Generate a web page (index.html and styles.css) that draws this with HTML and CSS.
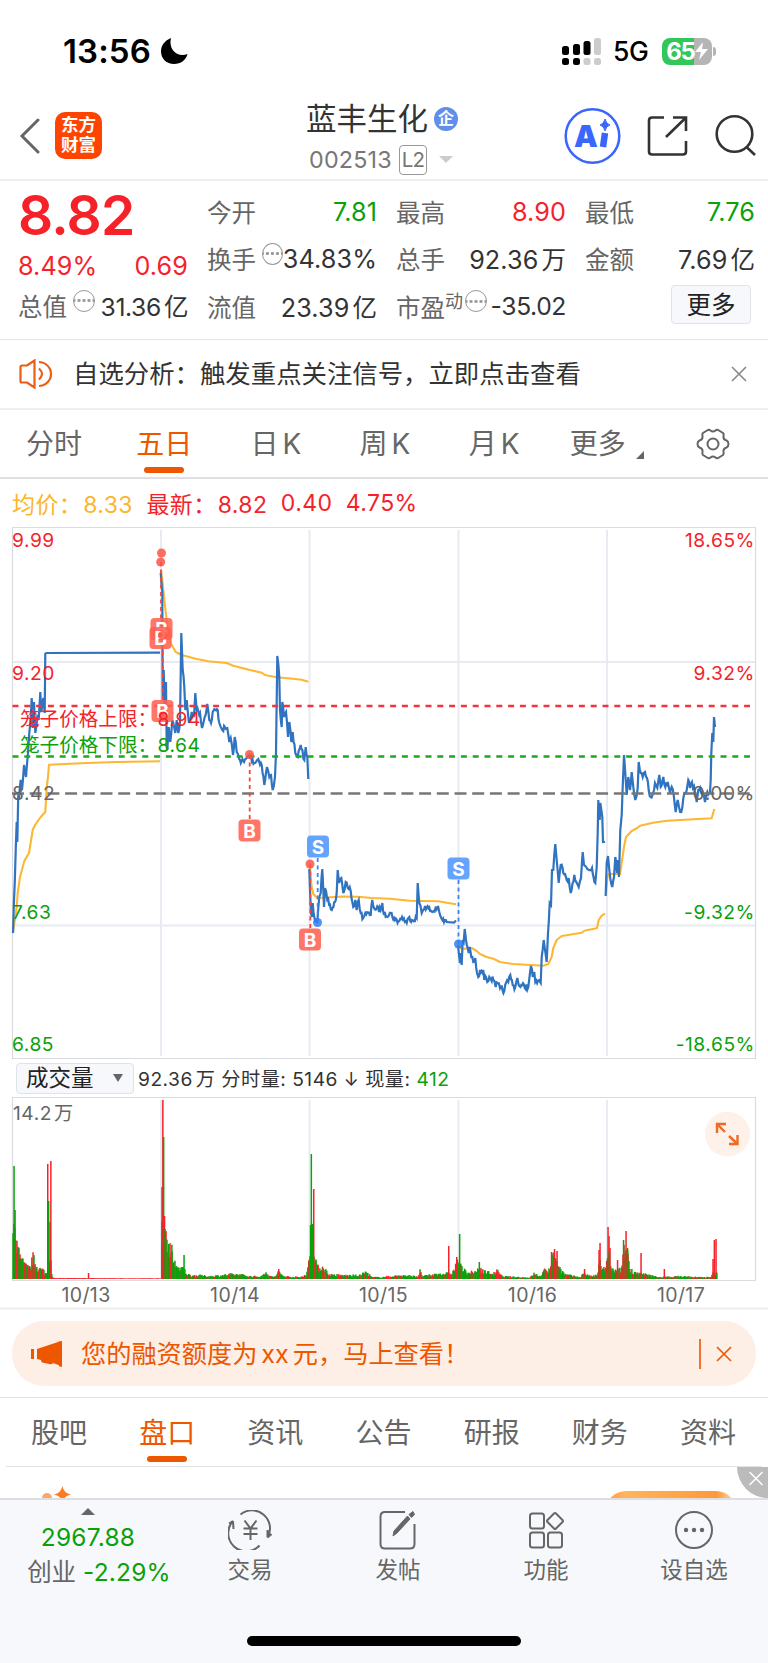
FILE: index.html
```html
<!DOCTYPE html>
<html lang="zh-CN">
	<head>
		<meta charset="UTF-8">
		<title>蓝丰生化 002513</title>
		<link rel="stylesheet" href="styles.css">
		<script src="chart.js" defer></script>
	</head>
	<body>
		<div class="status">
			<div class="clock">13:56</div>
			<svg class="moon" width="27" height="26" viewBox="0 0 27 26"><path d="M10 0C3 3 0 8 0 13.500C0 20.500 5.500 26 13 26C20 26 25 22 26.500 16C17 20 7 12 10 0Z"/></svg>
			<svg class="signal" width="40" height="27" viewBox="0 0 40 27">
				<g fill="#000">
					<rect x="0" y="8" width="7" height="9" rx="2.500"/><rect x="11" y="6" width="7" height="11" rx="2.500"/><rect x="21.500" y="3" width="7" height="14" rx="2.500"/>
					<rect x="0" y="20" width="7" height="7" rx="2.500"/><rect x="11" y="20" width="7" height="7" rx="2.500"/>
				</g>
				<g fill="#ccc">
					<rect x="32" y="0" width="7" height="17" rx="2.500"/><rect x="21.500" y="20" width="7" height="7" rx="2.500"/><rect x="32" y="20" width="7" height="7" rx="2.500"/>
				</g>
			</svg>
			<div class="net">5G</div>
			<div class="battery">
				<span>65</span>
				<svg width="13" height="18" viewBox="0 0 13 18"><path d="M8 0L0 10H6L4 18L13 7H7Z" fill="#fff"/></svg>
			</div>
			<i class="cap"></i>
		</div>

		<div class="header">
			<svg class="back" width="22" height="36" viewBox="0 0 22 36"><path d="M19 2L3 18L19 34"/></svg>
			<div class="logo">东方<br>财富</div>
			<div class="title">
				<div class="name">蓝丰生化<span class="qi">企</span></div>
				<div class="code">002513<span class="l2">L2</span><i class="down"></i></div>
			</div>
			<svg class="tools" width="200" height="60" viewBox="560 106 200 60">
				<circle cx="592.500" cy="136" r="26.800" stroke="#3a66fb" stroke-width="2.500"/>
				<text x="574" y="147" class="ai">A</text>
				<path d="M605 133L603 147" stroke="#3a66fb" stroke-width="6.500"/>
				<path d="M605 119Q606 124 610 125Q606 126 605 131Q604 126 600 125Q604 124 605 119Z" fill="#3a66fb" stroke="#3a66fb" stroke-width="1"/>
				<path d="M664 117.500H652Q649 117.500 649 120.500V151.500Q649 154.500 652 154.500H683Q686 154.500 686 151.500V141M673 117.500H686V131M685.500 118L666 137"/>
				<circle cx="734.500" cy="134" r="17.800"/>
				<path d="M746.500 147L755 155"/>
			</svg>
		</div>

		<div class="quote">
			<div class="now">
				<div class="price">8.82</div>
				<div class="cell red"><span>8.49%</span><span>0.69</span></div>
				<div class="cell"><label>总值</label><i class="dots"></i><span class="tight">31.36<em>亿</em></span></div>
			</div>
			<div class="col">
				<div class="cell"><label>今开</label><span class="green">7.81</span></div>
				<div class="cell"><label>换手</label><i class="dots"></i><span>34.83%</span></div>
				<div class="cell"><label>流值</label><span>23.39<em>亿</em></span></div>
			</div>
			<div class="col">
				<div class="cell"><label>最高</label><span class="red">8.90</span></div>
				<div class="cell"><label>总手</label><span>92.36<em>万</em></span></div>
				<div class="cell"><label>市盈<sup>动</sup></label><i class="dots"></i><span class="tight">-35.02</span></div>
			</div>
			<div class="col">
				<div class="cell"><label>最低</label><span class="green">7.76</span></div>
				<div class="cell"><label>金额</label><span>7.69<em>亿</em></span></div>
				<div class="cell end"><button class="more">更多</button></div>
			</div>
		</div>

		<div class="notice">
			<svg width="34" height="30" viewBox="0 0 34 30"><path d="M1.500 8Q1.500 6.500 3 6.500H8L15.500 1.500V28.500L8 23.500H3Q1.500 23.500 1.500 22ZM20 9.500Q26 15 20 20.500M20 3Q27 3 31 10Q33 15 31 20Q27 27 20 27"/></svg>
			<p>自选分析：触发重点关注信号，立即点击查看</p>
			<svg class="close" width="16" height="16" viewBox="0 0 16 16"><path d="M1 1L15 15M15 1L1 15"/></svg>
		</div>

		<div class="tabs period">
			<span>分时</span>
			<span class="on">五日</span>
			<span>日<b>K</b></span>
			<span>周<b>K</b></span>
			<span>月<b>K</b></span>
			<span class="drop">更多</span>
			<svg width="34" height="32" viewBox="0 0 34 32"><path d="M11 2.500Q13 1 14.500 2.500Q17 4.500 19.500 2.500Q21 1 23 2.500L27 5Q28 6 27.500 8Q27 11.500 30.500 12.500Q32.500 13.500 32.500 16Q32.500 18.500 30.500 19.500Q27 20.500 27.500 24Q28 26 27 27L23 29.500Q21 31 19.500 29.500Q17 27.500 14.500 29.500Q13 31 11 29.500L7 27Q6 26 6.500 24Q7 20.500 3.500 19.500Q1.500 18.500 1.500 16Q1.500 13.500 3.500 12.500Q7 11.500 6.500 8Q6 6 7 5Z"/><circle cx="17" cy="16" r="5.500"/></svg>
		</div>

		<div class="info red"><span class="avg">均价：<b>8.33</b></span><span>最新：<b>8.82</b></span><span>0.40</span><span>4.75%</span></div>

		<!-- price chart, five sessions -->
		<svg class="price-chart" width="768" height="534" viewBox="0 526 768 534">
			<path class="grid" d="M161 530V1056M309.500 530V1056M458.500 530V1056M607 530V1056M12 662H755M12 925.500H755"/>
			<path class="frame" d="M12.500 527.500H755.500V1058.500H12.500Z"/>
			<g id="avg"></g>
			<g id="line"></g>
			<path class="limit" stroke="#f2353c" d="M12.500 706H750"/>
			<path class="limit" stroke="#1fa81f" d="M12.500 756.500H750"/>
			<path class="base" d="M12 793.500H750"/>
			<g id="marks"></g>
			<g class="axis red">
				<text x="12" y="547">9.99</text><text x="12" y="679.500">9.20</text>
				<text class="r" x="755" y="547">18.65%</text><text class="r" x="755" y="679.500">9.32%</text>
			</g>
			<g class="axis gray">
				<text x="12" y="799.500">8.42</text><text class="r" x="755" y="799.500">0.00%</text>
			</g>
			<g class="axis green">
				<text x="12" y="918.500">7.63</text><text x="12" y="1051">6.85</text>
				<text class="r" x="755" y="918.500">-9.32%</text><text class="r" x="755" y="1051">-18.65%</text>
			</g>
			<text class="cage red" x="20" y="725.500">笼子价格上限：<tspan x="157.500">8.94</tspan></text>
			<text class="cage green" x="20" y="751.500">笼子价格下限：<tspan x="157.500">8.64</tspan></text>
		</svg>

		<div class="vol-head">
			<button>成交量<i class="tri"></i></button>
			<p>92.36<em>万</em> 分时量: 5146 <span class="arrow">↓</span> 现量: <span class="green">412</span></p>
		</div>
		<svg class="vol-chart" width="768" height="214" viewBox="0 1096 768 214">
			<path class="grid" d="M161 1100V1279M309.500 1100V1279M458.500 1100V1279M607 1100V1279"/>
			<path class="frame" d="M12.500 1280.500V1097.500H755.500V1280.500Z"/>
			<path d="M0 1308.500H768" stroke="#eee" stroke-width="2"/>
			<g id="vol"></g>
			<text class="axis gray" x="13" y="1119.500">14.2<tspan dx="2">万</tspan></text>
			<circle cx="727.500" cy="1134" r="22.500" fill="#fdf1ea"/>
			<path class="expand" d="M717 1133V1124H726M717.500 1124.500L725 1132M729 1144H737.500V1135M737 1143.500L729 1136"/>
			<g class="dates">
				<text x="86" y="1302">10/13</text><text x="235" y="1302">10/14</text><text x="383.500" y="1302">10/15</text><text x="532.500" y="1302">10/16</text><text x="681" y="1302">10/17</text>
			</g>
		</svg>

		<div class="banner-wrap">
			<div class="banner">
				<svg width="32" height="26" viewBox="0 0 32 26"><path d="M0 8H3V18H0ZM6 8L27 1Q28 0 31 0V26Q28 26 27.500 24L22 22Q21 24 18 23L11 21.500Q10 20 10 19L6 18Z" fill="#ec5700"/></svg>
				<p>您的融资额度为<b>xx</b>元，马上查看！</p>
				<svg class="bclose" width="34" height="30" viewBox="0 0 34 30"><path d="M1 0V30M18 8L32 22M32 8L18 22"/></svg>
			</div>
		</div>

		<div class="tabs nav">
			<span>股吧</span><span class="on">盘口</span><span>资讯</span><span>公告</span><span>研报</span><span>财务</span><span>资料</span>
		</div>

		<div class="peek">
			<svg width="768" height="31" viewBox="0 1467 768 31">
				<defs><linearGradient id="pill"><stop offset="0" stop-color="#ff9a45"/><stop offset=".15" stop-color="#ffb45c"/><stop offset=".85" stop-color="#ff9838"/><stop offset="1" stop-color="#ffe0a8"/></linearGradient></defs>
				<path d="M62.500 1486Q63.500 1493 71 1494.500Q65 1496 64 1499H61Q60 1496 54 1494.500Q61 1493 62.500 1486Z" fill="#ff7a22"/>
				<circle cx="47" cy="1498" r="5" fill="#ffa56c"/>
				<rect x="606" y="1491" width="130" height="40" rx="20" fill="url(#pill)"/>
				<circle cx="768" cy="1467" r="31" fill="#bbb"/>
				<path d="M749.500 1472L762.500 1485M762.500 1472L749.500 1485" stroke="#fff" stroke-width="1.500"/>
			</svg>
		</div>

		<div class="footer">
			<div class="index">
				<i class="up"></i>
				<div class="green">2967.88</div>
				<div>创业 <span class="green">-2.29%</span></div>
			</div>
			<div class="item">
				<svg width="44" height="40" viewBox="0 0 44 40"><path d="M12.500 4.500A18 18 0 0 1 39.500 27.500L43.500 24M31.500 35.500A18 18 0 0 1 5 11L1 13.500M5 11L5.500 19M39.500 27.500L39.500 20M16.500 10.500L22.500 18.500L28.500 10.500M22.500 18.500V30M15.500 18.500H29.500M15.500 24H29.500"/></svg>
				交易
			</div>
			<div class="item">
				<svg width="44" height="40" viewBox="0 0 44 40"><path d="M29 2H9Q4.500 2 4.500 6.500V34Q4.500 38.500 9 38.500H34Q38.500 38.500 38.500 34V14"/><path d="M17 26L18 21L31.500 6L34 9L21 23ZM33 4.500L37 1.500L38.500 4.500L35.500 7.500Z" fill="#666" stroke-width="1"/></svg>
				发帖
			</div>
			<div class="item">
				<svg width="44" height="40" viewBox="0 0 44 40"><rect x="6" y="3.500" width="14" height="15" rx="2.500"/><rect x="6" y="22.500" width="14" height="15" rx="2.500"/><rect x="24" y="22.500" width="14" height="15" rx="2.500"/><path d="M30 3.500Q31 2.500 32 3.500L38.500 10Q39.500 11 38.500 12L32 18.500Q31 19.500 30 18.500L23.500 12Q22.500 11 23.500 10Z"/></svg>
				功能
			</div>
			<div class="item">
				<svg width="44" height="40" viewBox="0 0 44 40"><circle cx="22" cy="20" r="18"/><g fill="#666" stroke="none"><circle cx="14" cy="20" r="2.200"/><circle cx="22" cy="20" r="2.200"/><circle cx="30" cy="20" r="2.200"/></g></svg>
				设自选
			</div>
			<i class="home"></i>
		</div>
	</body>
</html>
```
FILE: styles.css
```css
*{margin:0;padding:0;box-sizing:border-box;}
body{width:768px;height:1663px;overflow:hidden;background:#fff;color:#333;font-family:Inter,"Noto Sans CJK SC",sans-serif;display:flex;flex-direction:column;}
body > *{flex:none;}
svg{display:block;fill:none;}
i,em{font-style:normal;}
b{font-weight:400;}
button{font-family:inherit;color:#222;background:#f7f8fb;border:1px solid #dfe2e9;border-radius:4px;}
.red{color:#f5222a;fill:#f5222a;}
.green{color:#0aa10a;fill:#0aa10a;}
.gray{fill:#666;}

.status{height:90px;padding:12px 0 0 63px;display:flex;align-items:center;}
.clock{width:98px;font-size:33px;font-weight:600;color:#000;letter-spacing:.1px;}
.moon{fill:#000;margin-right:374px;}
.signal{margin-right:11px;}
.net{width:49px;font-size:26.5px;color:#000;font-weight:500;letter-spacing:-.3px;}
.battery{width:50px;height:27px;border-radius:8px;background:linear-gradient(90deg,#32c758 65%,#b5b5b5 65%);display:flex;align-items:center;justify-content:center;color:#fff;font-size:24px;font-weight:700;letter-spacing:-1.2px;}
.cap{width:3px;height:9px;margin-left:1px;border-radius:0 4px 4px 0;background:#b5b5b5;}

.header{height:91px;border-bottom:2px solid #eee;display:flex;align-items:center;padding:2px 0 0 19px;}
.back{stroke:#666;stroke-width:3;stroke-linecap:round;margin-right:14px;}
.logo{width:47px;height:47px;background:#ff4400;border-radius:10px;color:#fff;font-size:17.500px;font-weight:700;line-height:20px;text-align:center;padding-top:3px;}
.title{margin-left:204px;width:254px;padding-top:6px;}
.name{font-size:30.500px;line-height:40px;height:42px;display:flex;align-items:center;}
.qi{width:24px;height:24px;margin-left:6px;border-radius:50%;background:#618ee9;color:#fff;font-size:16px;line-height:23px;text-align:center;font-weight:700;}
.code{display:flex;align-items:center;height:39px;padding-left:3px;font-size:23.300px;letter-spacing:.2px;color:#777;}
.l2{width:28px;height:30px;margin:0 12px 0 7px;border:1.500px solid #999;border-radius:4px;font-size:20.500px;line-height:28px;text-align:center;letter-spacing:-1px;}
.down{border:7px solid transparent;border-top-color:#ccc;border-bottom:0;}
.tools{stroke:#333;stroke-width:2.600;}
.ai{font-size:30px;font-weight:900;fill:#3a66fb;stroke:none;}

.quote{height:159px;border-bottom:1.500px solid #e6e6e6;display:grid;grid-template-columns:170px 170px 170px 170px;column-gap:19px;padding:7px 0 0 18px;}
.cell{height:47.300px;display:flex;align-items:center;justify-content:space-between;font-size:24.500px;white-space:nowrap;}
.cell em{margin-left:3px;font-size:24.500px;}
.cell span{font-size:25.200px;letter-spacing:.1px;}
.cell .tight{font-size:24.700px;letter-spacing:-.4px;}
.cell label{color:#666;position:relative;}
.cell.end{justify-content:flex-end;}
.cell sup{font-size:18px;line-height:1;vertical-align:9px;}
.price{height:54px;line-height:54px;font-size:55px;font-weight:600;letter-spacing:-.8px;color:#f5222a;}
.now .cell:nth-child(2){height:40px;padding-top:8px;}
.dots{width:22px;height:22px;margin:-10px auto 0 6px;border:1.500px solid #999;border-radius:50%;background:radial-gradient(circle,#999 1.300px,transparent 1.800px) 50% 50%/5px 19px repeat-x;}
.cell label:has(sup) + .dots{margin-left:2px;}
.more{width:80px;height:39px;margin-right:4px;margin-top:-3px;font-size:24.500px;line-height:34px;}

.notice{height:70px;border-bottom:2px solid #eee;display:flex;align-items:center;padding:0 21px 0 19px;}
.notice svg{stroke:#ec5e12;stroke-width:2.200;}
.notice p{flex:1;margin:-4px 0 0 20px;font-size:25.400px;}
.notice .close{stroke:#888;stroke-width:1.600;}

.tabs{display:flex;align-items:center;font-size:28px;color:#666;white-space:nowrap;}
.tabs span{position:relative;top:-2px;text-align:center;}
.tabs b{margin-left:4px;}
.tabs .on{color:#ec5700;}
.on:after{content:"";position:absolute;left:50%;bottom:-11px;width:40px;height:6px;margin-left:-20px;border-radius:3px;background:#ec5700;}
.period{height:69px;border-bottom:2px solid #dfdfe5;padding:0 38px 0 26px;justify-content:space-between;}
.period span:nth-child(1){margin-right:-4px;}
.period span:nth-child(5){margin-right:-8px;}
.period .drop{margin-right:12px;}
.period svg{stroke:#666;stroke-width:2;}
.drop:after{content:"";position:absolute;right:-18px;bottom:3px;border:4px solid #666;border-top-color:transparent;border-left-color:transparent;}

.info{height:47px;display:flex;align-items:center;gap:13.500px;padding:1px 0 0 12px;font-size:23px;letter-spacing:.4px;}
.info b{margin-left:1px;}
.info .avg{color:#fcb52e;}

.grid{stroke:#e8ebf1;stroke-width:2;}
.frame{stroke:#d9dbe0;stroke-width:1.200;}
#avg{stroke:#fdb733;stroke-width:2.100;stroke-linejoin:round;}
#line{stroke:#3073c0;stroke-width:2.200;}
.limit{stroke-width:2.300;stroke-dasharray:6 5.800;}
.base{stroke:#777;stroke-width:2.600;stroke-dasharray:12 5.700;}
.axis{font-size:19.200px;letter-spacing:.55px;}
.r{text-anchor:end;}
.cage{font-size:19.600px;}
.cage tspan{font-size:19.200px;letter-spacing:.55px;}
.badge{font-size:19px;font-weight:700;fill:#fff;text-anchor:middle;}

.vol-head{height:36px;display:flex;align-items:center;padding-left:16px;}
.vol-head button{width:118px;height:31px;font-size:22.500px;line-height:26px;display:flex;align-items:center;padding-left:9px;}
.tri{margin-left:19px;border:5px solid transparent;border-top:8px solid #666;border-bottom:0;}
.vol-head p{margin-left:4px;font-size:19.200px;letter-spacing:.48px;white-space:nowrap;}
.vol-head em{margin-left:3px;}
.arrow{font-size:18px;}
.expand{stroke:#f06a22;stroke-width:2.400;}
.dates{font-size:19.500px;letter-spacing:.4px;fill:#666;text-anchor:middle;}

.banner-wrap{height:88px;padding:11px 12px 0;border-bottom:1.500px solid #e3e3e3;}
.banner{height:65px;border-radius:32px;background:#fdeee6;color:#ec5700;display:flex;align-items:center;padding:0 23px 0 19px;font-size:25.200px;}
.banner p{flex:1;margin:-4px 0 0 18px;}
.banner p b{margin:0 4px;}
.bclose{stroke:#ec5700;stroke-width:1.600;}

.nav{height:69px;margin:0 6px;padding:2px 26px 0 25px;border-bottom:1.500px solid #e3e3e3;justify-content:space-between;}
.peek{height:31px;}

.footer{height:165px;border-top:2px solid #dcdee2;background:#f7f8fb;display:flex;color:#666;position:relative;}
.index{width:176px;padding-top:8px;text-align:center;font-size:24.500px;line-height:35px;display:flex;flex-direction:column;align-items:center;white-space:nowrap;}
.index .up{border:7px solid transparent;border-bottom-color:#666;border-top:0;margin-bottom:5px;}
.index .green{letter-spacing:.2px;}
.index > div:last-child{margin-left:22px;}
.item{width:148px;padding-top:10px;display:flex;flex-direction:column;align-items:center;font-size:22.500px;line-height:40px;}
.item svg{stroke:#666;stroke-width:2;}
.home{position:absolute;left:247px;bottom:17px;width:274px;height:10px;border-radius:5px;background:#000;}
```
FILE: chart.js
```javascript
var NS='http://www.w3.org/2000/svg';
var price=[
	'13,933 16.700,822 17.300,842 18.300,793 19,798 20.700,780 22,790 24,765 26,777 28,753 29.300,733 31,713 31.700,698 32.700,728 34,702 35.300,733 37.300,717 38.700,720 40.300,692 41.300,712 43.300,698 44.700,713 45.300,653',
	'160.700,573 162.300,592 162.700,700 163.700,670 164.700,707 166,682 166.700,747 167.300,750 168.700,727 170.300,742 172.300,720 175.300,733 176.700,720 178.300,733 180,723 181.300,633 182.700,670 184.300,687 185.300,710 186.700,700 189,723 191.700,712 194,716 195.300,693 196.700,710 200,713 202,728 204.700,717 207.300,704 209.300,720 211,723 212.700,712 217.700,710 219.300,723 221.700,729 227.300,728 229.300,742 230.700,738 233,755 234.700,737 236.700,752 240,760 244,762 249.300,755 254.300,763 258.300,759 261.700,765 264.300,785 267,767 269.300,777 271,775 272.700,790 275,777 276,753 277.300,656 279.300,677 280,710 281.700,727 282.300,702 284,717 286,712 288,737 289.300,722 291.300,742 292.700,732 295.300,753 297.700,757 300.700,745 304.300,760 305.700,747 307.300,757 308.300,779',
	'309.300,869 311,913 312,917 312.700,903 314.300,917 317.300,922 319.300,897 320.700,893 322.300,869 324,907 325,888 327.300,900 331.700,910 335,902 336.700,893 337.700,870 339,883 341.300,878 343.300,893 345.700,882 347.700,888 350.700,891 353.300,907 355.300,900 356.700,910 358.700,900 360.700,913 363.300,918 365.300,913 370.700,915 372.300,900 374,908 380.700,910 382.300,903 384,915 390.700,913 395,920 399.300,921 402,917 406.700,923 409.300,917 412,920 416.700,918 417.700,883 419.300,903 421.700,913 425,906 432.700,912 437.300,907 440,915 442.300,920 446.700,922',
	'458,945 459,955 460,963 460.700,953 461.700,965 462.700,940 463.700,942 464.700,929 466,940 467.700,948 468.700,953 469.700,947 471.300,957 473.300,962 475.300,958 477,973 478.300,977 480,970 483.300,970 484.300,980 486,977 487.300,982 489.300,977 493.300,980 495.700,987 497.700,983 500,988 504.300,991 506,983 508.300,982 510.300,975 512.700,985 515.300,987 517.300,978 518.700,985 528.300,987 530,973 531,966 532.700,977 534.300,972 535.300,982 540.700,983 541.700,957 543.700,940 546.700,962 548,933 549.700,903 551,905 552,870 553.300,870 555.300,844 556.700,860 558.700,883 560.700,865 563.300,873 566.700,880 568.700,878 570.700,893 574.300,875 578.700,887 581,878 582.700,852 584,865 590,870 592,868 595.300,883 596.700,867 597.700,833 598.300,800 599.700,820 600.300,803 602.300,817 603,842 605,842',
	'605.700,896 606.700,863 608,856 609.300,870 612.300,887 614,877 615.300,857 617,873 617.500,860 619,877 620.300,830 621.700,815 622.700,787 624,755 625.300,773 626.700,795 628.300,777 630,790 631.700,772 633.300,787 635.300,800 637.700,788 638.700,762 640.700,773 642.700,777 645,772 647,778 648.700,790 650.700,797 653.300,793 655,783 657.300,788 659.300,775 660.700,787 663.300,777 665.300,787 667.700,782 670,793 671.700,787 673.700,795 675.700,812 677.700,800 679,807 681.300,812 684.300,793 686.700,790 688.300,780 690,788 692,782 695,793 696.700,802 698.300,790 702.700,792 705,802 707.300,792 710,792 710.700,780 711.300,753 712.300,733 713.300,742 714,717 715,727'
];
// parts of the line with no trades in them
var flat=['45.300,653 160,652.700','446,922 454,922.500 456,920.500'];
var avg=[
	'13,932 16.700,907 17.700,893 20,877 24.300,861 29,853 32.700,830 35,825 40.700,817 45.300,812 46.700,787 48,777 49,764.700 86.700,763 116.700,762 160,761.300',
	'161,570 162.300,580 164,597 166.300,617 167.700,633 171.700,645 175.700,652 181.700,655 196.700,659 208.300,661.300 226.700,663 233.300,665.700 250,670 261.700,672.700 265,675 276.700,677.300 293.300,678.700 301.700,679.700 308.300,681.700',
	'310,867 311.700,887 313.300,894 317.300,898 343.300,896.500 358,896.700 371.700,898 390,898.700 410,900.700 438.300,901.300 446.700,902.700 456,904.300',
	'458.700,945 461.700,949 471.700,948 476.700,951 480,954 486.700,957 494,959 500,962 513.300,964 543.300,965.700 548.300,964 551.700,957 553.300,948 556.700,940 561.700,936 581.700,932.700 585,930.500 596.700,928.300 597.300,926.700 598.700,920 601.700,915.700 605,913.700',
	'606,893 607.700,875 610,874 620,874 621.700,863 624,847 626,837 631.700,831 637.300,828 640,825.700 653,822.700 666.700,820.700 711.700,818.300 714.300,809'
];
// x, height
var volume=[[13,70],[16,35],[18,33],[20,36],[22,20],[26,14],[30,12],[33,24],[35,18],[38,12],[43,10],[46,6],[47,7],[50,30],[52,2],[54,1],[161,.6],[162,60],[164,55],[166,42],[170,38],[172,30],[174,18],[178,15],[180,9],[183,13],[186,7],[190,4],[200,4],[210,3],[230,5],[240,5],[250,3],[262,3],[266,9],[269,3],[276,3],[278,8],[284,3],[300,2],[306,5],[309,18],[311,40],[314,32],[316,20],[318,12],[324,14],[328,5],[345,4],[360,4],[366,8],[372,2],[380,2],[400,4],[418,3],[420,9],[422,3],[440,6],[452,6],[458,20],[461,13],[466,8],[475,7],[480,13],[485,8],[495,6],[497,9],[502,3],[530,1.5],[534,6],[540,3],[545,10],[548,9],[552,24],[556,25],[559,13],[565,5],[575,3],[581,2],[583,7],[590,3],[597,4],[600,20],[603,10],[608,20],[612,10],[618,9],[622,12],[624,36],[628,30],[630,10],[640,6],[650,4],[660,2],[680,3],[700,2],[711,2],[713,6],[717,6]];
var spikes=[[14,113,1],[15,69,1],[47.7,115,0],[48.6,78,1],[50,57,0],[50.8,118,0],[88.5,6,0],[162,92,0],[162.8,179,0],[163.6,142,1],[164.5,63,0],[165,50,1],[184,24,1],[310.5,54,1],[311.3,125,1],[313.7,90,0],[312.6,55,1],[278.7,10,0],[448.7,33,0],[456.7,22,0],[459.6,45,1],[479.3,17,1],[551.5,27,0],[554.5,30,0],[557,28,0],[553,23,1],[584.5,10,0],[599,29,0],[600,36,0],[608,52,0],[609,43,0],[610,31,0],[609.2,27,1],[617.5,19,0],[623.5,39,1],[626,48,0],[627.5,31,1],[641,26,0],[664.3,10,0],[713,20,0],[714.3,39,0],[716,40,0],[716.6,6,1]];
var marks=[['B',161.500,629],['B',160.500,638],['B',162.500,711],['B',249.500,830.500],['B',310,939.500],['S',318,846.500],['S',458.500,868.500]];
var dots=[['B',161.500,553],['B',160.700,562],['B',162.500,635.500],['B',163,716],['B',249.500,754.500],['B',310,864],['S',317.500,922.500],['S',458.500,944]];
var stems=[['B',161,562,627],['B',162.700,636,710],['B',249.700,755,819],['B',310.300,864,929],['S',317.700,858,922],['S',458.500,880,944]];
var seed=7;
function rand(){
	seed=(seed*16807)%2147483647;
	return seed/2147483647;
}
function add(parent,tag,attrs,text){
	var el=document.createElementNS(NS,tag);
	for(var k in attrs){
		el.setAttribute(k,attrs[k]);
	}
	if(text){
		el.textContent=text;
	}
	parent.appendChild(el);
}
// small ticks between the key points
function ticks(str){
	var pts=str.split(' ').map(function(p){return p.split(',').map(Number);});
	var out=[pts[0]];
	for(var i=1;i<pts.length;i++){
		var a=pts[i-1],b=pts[i];
		var n=Math.floor((b[0]-a[0])/.8);
		for(var j=1;j<n;j++){
			out.push([a[0]+(b[0]-a[0])*j/n,a[1]+(b[1]-a[1])*j/n+(rand()-.5)*6]);
		}
		out.push(b);
	}
	return out.join(' ');
}
var oAvg=document.getElementById('avg');
var oLine=document.getElementById('line');
var oMarks=document.getElementById('marks');
var oVol=document.getElementById('vol');
avg.forEach(function(p){add(oAvg,'polyline',{points:p});});
price.forEach(function(p){add(oLine,'polyline',{points:ticks(p)});});
flat.forEach(function(p){add(oLine,'polyline',{points:p});});

stems.forEach(function(s){
	add(oMarks,'path',{d:'M'+s[1]+' '+s[2]+'V'+s[3],stroke:s[0]=='B'?'#f5453c':'#3c86f5','stroke-width':1.8,'stroke-dasharray':'4 3.500'});
});
marks.forEach(function(m){
	add(oMarks,'rect',{x:m[1]-11,y:m[2]-11,width:22,height:22,rx:4,fill:m[0]=='B'?'#ff604f':'#4a95ff','fill-opacity':.86});
	add(oMarks,'text',{x:m[1],y:m[2]+7,'class':'badge'},m[0]);
});
dots.forEach(function(d){
	add(oMarks,'circle',{cx:d[1],cy:d[2],r:4.5,fill:d[0]=='B'?'#fb5545':'#2f7ff5','fill-opacity':.85});
});

function bar(x,h,green){
	add(oVol,'rect',{x:x-.7,y:1279-h,width:1.5,height:h,fill:green?'#0aa10a':'#f5222a'});
}
for(var i=1;i<volume.length;i++){
	var a=volume[i-1],b=volume[i];
	for(var x=a[0];x<b[0];x+=.9){
		var h=a[1]+(b[1]-a[1])*(x-a[0])/(b[0]-a[0]);
		bar(x,h*(.55+rand()*.6),x>52&&x<161?0:rand()<(x<52?.45:.7));
	}
}
spikes.forEach(function(s){bar(s[0],s[1],s[2]);});
```
